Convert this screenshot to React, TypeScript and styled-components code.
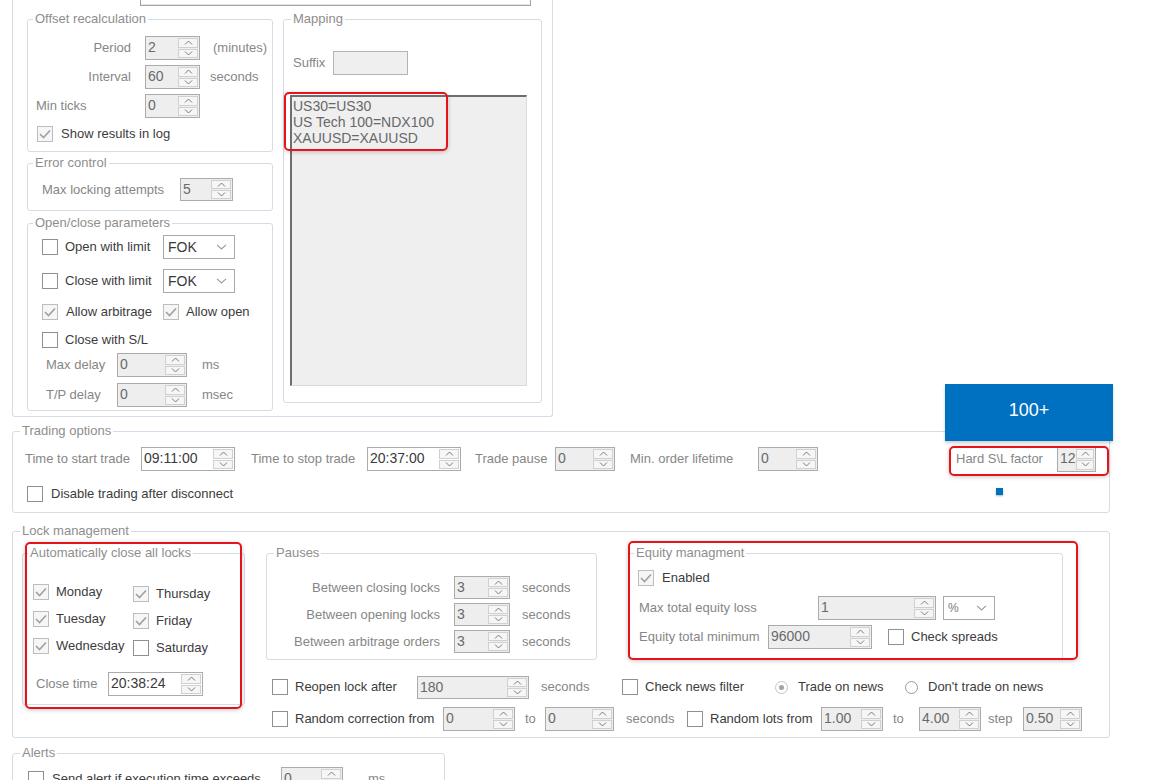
import React from "react";
import styled, { createGlobalStyle } from "styled-components";

const Global = createGlobalStyle`
  html, body { margin: 0; padding: 0; background: #fff; overflow: hidden; }
  body { font-family: "Liberation Sans", Arial, sans-serif; font-size: 13px; color: #868686; }
  * { box-sizing: border-box; }
`;

const Page = styled.div`
  width: 1159px;
  height: 780px;
  overflow: hidden;
  padding-left: 12px;
  display: flex;
  flex-direction: column;
`;

const Group = styled.div<{ $w?: number; $h?: number; $mt?: number }>`
  position: relative;
  flex: none;
  width: ${(p) => (p.$w ? `${p.$w}px` : "auto")};
  height: ${(p) => (p.$h ? `${p.$h}px` : "auto")};
  margin-top: ${(p) => p.$mt ?? 0}px;
  border: 1px solid #d6dce3;
  border-radius: 3px;
  display: flex;
  flex-direction: column;
`;

const Legend = styled.span<{ $l?: number }>`
  position: absolute;
  top: -9px;
  left: ${(p) => p.$l ?? 5}px;
  padding: 0 2px;
  background: #fff;
  color: #8e8e8e;
  font-size: 13px;
  line-height: 16px;
  white-space: nowrap;
`;

const TopGroup = styled.div`
  width: 541px;
  border: 1px solid #d6dce3;
  border-top: none;
  border-radius: 0 0 3px 3px;
  padding: 0 0 5px 14px;
  flex: none;
`;

const TopField = styled.div`
  margin-left: 113px;
  width: 391px;
  height: 6px;
  border: 1px solid #a3a3a3;
  border-top: none;
  box-shadow: inset 0 -1px 0 #e4e4e4;
`;

const Columns = styled.div`
  display: flex;
  align-items: flex-start;
  gap: 10px;
  margin-top: 13px;
`;

const LeftCol = styled.div`
  width: 246px;
  display: flex;
  flex-direction: column;
  gap: 11px;
`;

const Row = styled.div<{ $mt?: number; $pl?: number; $h?: number }>`
  display: flex;
  align-items: center;
  flex: none;
  height: ${(p) => p.$h ?? 24}px;
  margin-top: ${(p) => p.$mt ?? 0}px;
  padding-left: ${(p) => p.$pl ?? 0}px;
`;

const Label = styled.span<{ $w?: number; $right?: boolean; $dark?: boolean; $ml?: number; $mr?: number }>`
  flex: none;
  width: ${(p) => (p.$w ? `${p.$w}px` : "auto")};
  text-align: ${(p) => (p.$right ? "right" : "left")};
  color: ${(p) => (p.$dark ? "#3c3c3c" : "#868686")};
  margin-left: ${(p) => p.$ml ?? 0}px;
  margin-right: ${(p) => p.$mr ?? 0}px;
  white-space: nowrap;
  font-size: 13px;
  line-height: 16px;
`;

/* ---------- spin box ---------- */
const SpinBox = styled.div<{ $w: number; $h: number; $white?: boolean }>`
  flex: none;
  display: flex;
  align-items: stretch;
  width: ${(p) => p.$w}px;
  height: ${(p) => p.$h}px;
  border: 1px solid #ababab;
  background: ${(p) => (p.$white ? "#fff" : "#eeeeee")};
`;

const SpinValue = styled.span<{ $dark?: boolean }>`
  flex: 1;
  min-width: 0;
  padding-left: 2px;
  font-size: 14px;
  line-height: 21px;
  color: ${(p) => (p.$dark ? "#3a3a3a" : "#6a6a6a")};
  overflow: hidden;
  white-space: nowrap;
`;

const SpinArrows = styled.div<{ $aw: number }>`
  flex: none;
  width: ${(p) => p.$aw}px;
  display: flex;
  flex-direction: column;
  padding: 1px 1px 1px 0;
  gap: 1px;
`;

const ArrowBtn = styled.div`
  flex: 1;
  display: flex;
  align-items: center;
  justify-content: center;
  border: 1px solid #d0d0d0;
  background: #f6f6f6;
`;

const Chevron = ({ up }: { up?: boolean }) => (
  <svg width="9" height="5" viewBox="0 0 9 5">
    <polyline
      points={up ? "1,4.5 4.5,1 8,4.5" : "1,0.5 4.5,4 8,0.5"}
      fill="none"
      stroke="#7b7b7b"
      strokeWidth="1"
    />
  </svg>
);

function Spin({
  value,
  w,
  h = 24,
  white,
  dark,
  aw = 21,
}: {
  value: string;
  w: number;
  h?: number;
  white?: boolean;
  dark?: boolean;
  aw?: number;
}) {
  return (
    <SpinBox $w={w} $h={h} $white={white}>
      <SpinValue $dark={dark}>{value}</SpinValue>
      <SpinArrows $aw={aw}>
        <ArrowBtn>
          <Chevron up />
        </ArrowBtn>
        <ArrowBtn>
          <Chevron />
        </ArrowBtn>
      </SpinArrows>
    </SpinBox>
  );
}

/* ---------- text box ---------- */
const TextBox = styled.div<{ $w: number }>`
  flex: none;
  width: ${(p) => p.$w}px;
  height: 24px;
  border: 1px solid #b3b3b3;
  background: #efefef;
`;

/* ---------- select ---------- */
const SelectBox = styled.div<{ $w: number; $ml?: number }>`
  flex: none;
  width: ${(p) => p.$w}px;
  height: 24px;
  margin-left: ${(p) => p.$ml ?? 0}px;
  border: 1px solid #a9a9a9;
  background: #fff;
  display: flex;
  align-items: center;
  justify-content: space-between;
  padding: 0 7px 0 4px;
`;

const SelectText = styled.span<{ $small?: boolean }>`
  font-size: ${(p) => (p.$small ? 12 : 14)}px;
  color: ${(p) => (p.$small ? "#7a7a7a" : "#3a3a3a")};
`;

function Select({ value, w, ml, small }: { value: string; w: number; ml?: number; small?: boolean }) {
  return (
    <SelectBox $w={w} $ml={ml}>
      <SelectText $small={small}>{value}</SelectText>
      <svg width="11" height="6" viewBox="0 0 11 6">
        <polyline points="1,0.8 5.5,5 10,0.8" fill="none" stroke="#9a9a9a" strokeWidth="1.1" />
      </svg>
    </SelectBox>
  );
}

/* ---------- checkbox ---------- */
const CheckWrap = styled.label<{ $w?: number; $ml?: number; $gap?: number }>`
  flex: none;
  display: flex;
  align-items: center;
  gap: ${(p) => p.$gap ?? 7}px;
  width: ${(p) => (p.$w ? `${p.$w}px` : "auto")};
  margin-left: ${(p) => p.$ml ?? 0}px;
  height: 17px;
`;

const Box = styled.span<{ $checked?: boolean }>`
  flex: none;
  width: 16px;
  height: 16px;
  border: 1px solid ${(p) => (p.$checked ? "#bdbdbd" : "#8f8f8f")};
  background: ${(p) => (p.$checked ? "#f6f6f6" : "#fff")};
  display: flex;
  align-items: center;
  justify-content: center;
`;

const CheckText = styled.span`
  color: #3c3c3c;
  font-size: 13px;
  line-height: 16px;
  white-space: nowrap;
`;

function Check({ label, checked, w, ml, gap }: { label: string; checked?: boolean; w?: number; ml?: number; gap?: number }) {
  return (
    <CheckWrap $w={w} $ml={ml} $gap={gap}>
      <Box $checked={checked}>
        {checked && (
          <svg width="12" height="10" viewBox="0 0 12 10">
            <polyline points="1,5 4.5,8.5 11,1.5" fill="none" stroke="#a0a0a0" strokeWidth="1.6" />
          </svg>
        )}
      </Box>
      <CheckText>{label}</CheckText>
    </CheckWrap>
  );
}

/* ---------- radio ---------- */
const RadioWrap = styled.label<{ $w?: number }>`
  flex: none;
  display: flex;
  align-items: center;
  gap: 10px;
  width: ${(p) => (p.$w ? `${p.$w}px` : "auto")};
`;

const RadioDot = styled.span<{ $on?: boolean }>`
  flex: none;
  width: 13px;
  height: 13px;
  border-radius: 50%;
  border: 1px solid ${(p) => (p.$on ? "#c4c4c4" : "#9a9a9a")};
  background: #fff;
  display: flex;
  align-items: center;
  justify-content: center;
  &::after {
    content: "";
    width: 5px;
    height: 5px;
    border-radius: 50%;
    background: ${(p) => (p.$on ? "#a3a3a3" : "transparent")};
  }
`;

function Radio({ label, on, w }: { label: string; on?: boolean; w?: number }) {
  return (
    <RadioWrap $w={w}>
      <RadioDot $on={on} />
      <CheckText>{label}</CheckText>
    </RadioWrap>
  );
}

/* ---------- mapping ---------- */
const MapArea = styled.div`
  position: relative;
  margin: 20px 0 0 6px;
  width: 237px;
  height: 291px;
  border-top: 2px solid #6e6e6e;
  border-left: 2px solid #6e6e6e;
  border-right: 1px solid #dadada;
  border-bottom: 1px solid #dadada;
  background: #efefef;
  padding: 1px 0 0 1px;
  font-size: 14px;
  line-height: 16px;
  color: #686868;
`;

const MapLine = styled.div`
  white-space: nowrap;
`;

/* ---------- annotations ---------- */
const RedFrame = styled.div<{ $l: number; $t: number; $w: number; $h: number }>`
  position: absolute;
  left: ${(p) => p.$l}px;
  top: ${(p) => p.$t}px;
  width: ${(p) => p.$w}px;
  height: ${(p) => p.$h}px;
  border: 2px solid #e5141b;
  border-radius: 5px;
  box-shadow: 0 1px 4px rgba(0, 0, 0, 0.22);
  pointer-events: none;
`;

const BlueBadge = styled.div`
  position: absolute;
  left: -11px;
  top: -63px;
  width: 168px;
  height: 57px;
  background: #0070c0;
  color: #fff;
  font-size: 18px;
  display: flex;
  align-items: center;
  justify-content: center;
  padding-bottom: 3px;
  box-shadow: 0 2px 3px rgba(0, 0, 0, 0.2);
`;

const BlueDot = styled.div`
  position: absolute;
  left: 40px;
  top: 41px;
  width: 7px;
  height: 7px;
  background: #0070c0;
  box-shadow: 0 1px 2px rgba(0, 0, 0, 0.3);
`;

const HardSL = styled.div`
  position: relative;
  margin-left: auto;
  margin-right: 13px;
  display: flex;
  align-items: center;
`;

/* ---------- lock management ---------- */
const LockBody = styled.div`
  display: flex;
  padding: 21px 0 0 9px;
`;

const Anchor = styled.div<{ $ml?: number }>`
  position: relative;
  flex: none;
  margin-left: ${(p) => p.$ml ?? 0}px;
`;

const Days = styled.div`
  display: flex;
  padding: 29px 0 0 10px;
`;

const DayCol = styled.div<{ $w: number; $pt?: number }>`
  width: ${(p) => p.$w}px;
  padding-top: ${(p) => p.$pt ?? 0}px;
  display: flex;
  flex-direction: column;
  gap: 10px;
`;

const RightCol = styled.div`
  margin-left: 21px;
  display: flex;
  flex-direction: column;
`;

const TopRow = styled.div`
  display: flex;
`;

const PauseBody = styled.div`
  display: flex;
  flex-direction: column;
  gap: 4px;
  padding-top: 22px;
`;

export default function App() {
  return (
    <>
      <Global />
      <Page>
        <TopGroup>
          <TopField />
          <Columns>
            <LeftCol>
              <Group $h={133}>
                <Legend>Offset recalculation</Legend>
                <Row $mt={16}>
                  <Label $w={103} $right $mr={14}>Period</Label>
                  <Spin value="2" w={55} />
                  <Label $ml={13}>(minutes)</Label>
                </Row>
                <Row $mt={5}>
                  <Label $w={103} $right $mr={14}>Interval</Label>
                  <Spin value="60" w={55} />
                  <Label $ml={10}>seconds</Label>
                </Row>
                <Row $mt={5}>
                  <Label $w={109} $ml={8}>Min ticks</Label>
                  <Spin value="0" w={55} />
                </Row>
                <Row $mt={7} $h={17} $pl={9}>
                  <Check checked label="Show results in log" gap={8} />
                </Row>
              </Group>

              <Group $h={48}>
                <Legend>Error control</Legend>
                <Row $mt={14} $pl={14} $h={23}>
                  <Label $w={138}>Max locking attempts</Label>
                  <Spin value="5" w={53} h={23} />
                </Row>
              </Group>

              <Group $h={188} $mt={1}>
                <Legend>Open/close parameters</Legend>
                <Row $mt={11} $pl={14}>
                  <Check label="Open with limit" w={121} />
                  <Select value="FOK" w={72} />
                </Row>
                <Row $mt={10} $pl={14}>
                  <Check label="Close with limit" w={121} />
                  <Select value="FOK" w={72} />
                </Row>
                <Row $mt={7} $pl={14}>
                  <Check checked label="Allow arbitrage" w={121} gap={8} />
                  <Check checked label="Allow open" />
                </Row>
                <Row $mt={4} $pl={14}>
                  <Check label="Close with S/L" />
                </Row>
                <Row $mt={1} $pl={18}>
                  <Label $w={71}>Max delay</Label>
                  <Spin value="0" w={70} />
                  <Label $ml={15}>ms</Label>
                </Row>
                <Row $mt={6} $pl={18}>
                  <Label $w={71}>T/P delay</Label>
                  <Spin value="0" w={70} />
                  <Label $ml={15}>msec</Label>
                </Row>
              </Group>
            </LeftCol>

            <Group $w={259} $h={384}>
              <Legend $l={7}>Mapping</Legend>
              <Row $mt={31} $pl={9}>
                <Label $w={40}>Suffix</Label>
                <TextBox $w={75} />
              </Row>
              <MapArea>
                <MapLine>US30=US30</MapLine>
                <MapLine>US Tech 100=NDX100</MapLine>
                <MapLine>XAUUSD=XAUUSD</MapLine>
                <RedFrame $l={-8} $t={-5} $w={164} $h={59} />
              </MapArea>
            </Group>
          </Columns>
        </TopGroup>

        <Group $w={1098} $h={82} $mt={14}>
          <Legend $l={7}>Trading options</Legend>
          <Row $mt={15} $pl={12}>
            <Label $w={116}>Time to start trade</Label>
            <Spin value="09:11:00" w={94} white dark />
            <Label $w={116} $ml={16}>Time to stop trade</Label>
            <Spin value="20:37:00" w={94} white dark />
            <Label $w={80} $ml={14}>Trade pause</Label>
            <Spin value="0" w={60} />
            <Label $w={128} $ml={15}>Min. order lifetime</Label>
            <Spin value="0" w={60} />
            <HardSL>
              <Label $w={101}>Hard S\L factor</Label>
              <Spin value="12" w={39} h={25} aw={19} />
              <RedFrame $l={-7} $t={-1} $w={160} $h={30} />
              <BlueBadge>100+</BlueBadge>
              <BlueDot />
            </HardSL>
          </Row>
          <Row $mt={14} $h={17} $pl={14}>
            <Check label="Disable trading after disconnect" gap={8} />
          </Row>
        </Group>

        <Group $w={1098} $h={207} $mt={18}>
          <Legend $l={7}>Lock management</Legend>
          <LockBody>
            <Anchor>
              <Group $w={223} $h={152}>
                <Legend>Automatically close all locks</Legend>
                <Days>
                  <DayCol $w={100}>
                    <Check checked label="Monday" />
                    <Check checked label="Tuesday" />
                    <Check checked label="Wednesday" />
                  </DayCol>
                  <DayCol $w={100} $pt={2}>
                    <Check checked label="Thursday" />
                    <Check checked label="Friday" />
                    <Check label="Saturday" />
                  </DayCol>
                </Days>
                <Row $mt={16} $pl={13}>
                  <Label $w={72}>Close time</Label>
                  <Spin value="20:38:24" w={95} white dark />
                </Row>
              </Group>
              <RedFrame $l={3} $t={-11} $w={217} $h={167} />
            </Anchor>

            <RightCol>
              <TopRow>
                <Group $w={331} $h={107}>
                  <Legend $l={7}>Pauses</Legend>
                  <PauseBody>
                    <Row $h={23}>
                      <Label $w={173} $right $mr={14}>Between closing locks</Label>
                      <Spin value="3" w={56} h={23} />
                      <Label $ml={12}>seconds</Label>
                    </Row>
                    <Row $h={23}>
                      <Label $w={173} $right $mr={14}>Between opening locks</Label>
                      <Spin value="3" w={56} h={23} />
                      <Label $ml={12}>seconds</Label>
                    </Row>
                    <Row $h={23}>
                      <Label $w={173} $right $mr={14}>Between arbitrage orders</Label>
                      <Spin value="3" w={56} h={23} />
                      <Label $ml={12}>seconds</Label>
                    </Row>
                  </PauseBody>
                </Group>

                <Anchor $ml={31}>
                  <Group $w={435} $h={107}>
                    <Legend>Equity managment</Legend>
                    <Row $mt={16} $h={16} $pl={9}>
                      <Check checked label="Enabled" gap={8} />
                    </Row>
                    <Row $mt={10} $pl={10}>
                      <Label $w={179}>Max total equity loss</Label>
                      <Spin value="1" w={118} />
                      <Select value="%" w={52} ml={7} small />
                    </Row>
                    <Row $mt={5} $pl={10}>
                      <Label $w={129}>Equity total minimum</Label>
                      <Spin value="96000" w={104} />
                      <Check label="Check spreads" ml={16} />
                    </Row>
                  </Group>
                  <RedFrame $l={0} $t={-12} $w={450} $h={119} />
                </Anchor>
              </TopRow>

              <Row $mt={15} $pl={6}>
                <Check label="Reopen lock after" w={145} />
                <Spin value="180" w={112} h={23} />
                <Label $w={81} $ml={12}>seconds</Label>
                <Check label="Check news filter" w={153} />
                <Radio on label="Trade on news" w={130} />
                <Radio label="Don't trade on news" />
              </Row>
              <Row $mt={8} $pl={6}>
                <Check label="Random correction from" w={171} />
                <Spin value="0" w={72} />
                <Label $w={20} $ml={10}>to</Label>
                <Spin value="0" w={69} />
                <Label $w={61} $ml={12}>seconds</Label>
                <Check label="Random lots from" w={134} />
                <Spin value="1.00" w={62} />
                <Label $w={26} $ml={10}>to</Label>
                <Spin value="4.00" w={62} />
                <Label $w={35} $ml={7}>step</Label>
                <Spin value="0.50" w={59} />
              </Row>
            </RightCol>
          </LockBody>
        </Group>

        <Group $w={433} $h={60} $mt={15}>
          <Legend $l={7}>Alerts</Legend>
          <Row $mt={13} $pl={15}>
            <Check label="Send alert if execution time exceeds" w={253} gap={8} />
            <Spin value="0" w={62} />
            <Label $ml={25}>ms</Label>
          </Row>
        </Group>
      </Page>
    </>
  );
}
